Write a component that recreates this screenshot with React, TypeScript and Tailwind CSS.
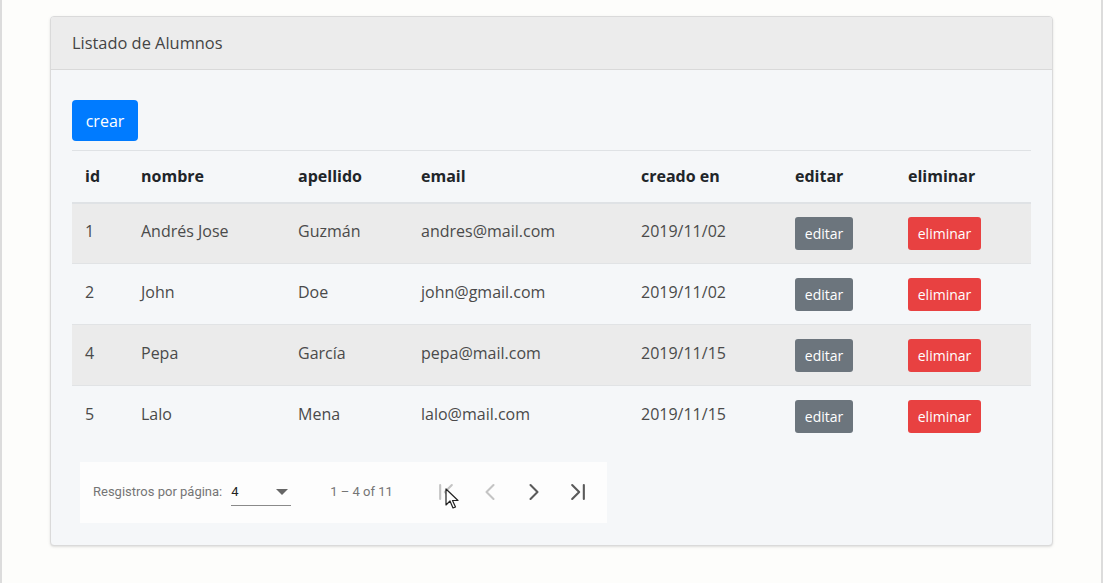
import { ChevronLeft, ChevronRight, ChevronFirst, ChevronLast } from 'lucide-react';

interface Alumno {
  id: number;
  nombre: string;
  apellido: string;
  email: string;
  creado: string;
}

const alumnos: Alumno[] = [
  { id: 1, nombre: 'Andrés Jose', apellido: 'Guzmán', email: 'andres@mail.com', creado: '2019/11/02' },
  { id: 2, nombre: 'John', apellido: 'Doe', email: 'john@gmail.com', creado: '2019/11/02' },
  { id: 4, nombre: 'Pepa', apellido: 'García', email: 'pepa@mail.com', creado: '2019/11/15' },
  { id: 5, nombre: 'Lalo', apellido: 'Mena', email: 'lalo@mail.com', creado: '2019/11/15' },
];

const columns = [
  { label: 'id', width: 'w-[56px]' },
  { label: 'nombre', width: 'w-[157px]' },
  { label: 'apellido', width: 'w-[123px]' },
  { label: 'email', width: 'w-[220px]' },
  { label: 'creado en', width: 'w-[154px]' },
  { label: 'editar', width: 'w-[113px]' },
  { label: 'eliminar', width: 'w-[136px]' },
];

const Paginator = () => (
  <div className="relative mt-[15px] ml-2 flex h-[61px] w-[527px] items-center bg-[#fdfdfd] pl-[13px] font-['Roboto',sans-serif] text-[13px] text-[#757575]">
    <span>Resgistros por página:</span>
    <div className="ml-[9px] flex h-[28px] w-[60px] items-center justify-between border-b border-[#8a8a8a] text-[#222]">
      <span>4</span>
      <svg width="12" height="6" viewBox="0 0 12 6" className="mr-[3px]">
        <path d="M0 0 L6 6 L12 0 Z" fill="#666" />
      </svg>
    </div>
    <span className="ml-[39px]">1 – 4 of 11</span>
    <div className="ml-[39px] flex items-center gap-[16px]">
      <ChevronFirst size={28} strokeWidth={1.8} className="text-[#c4c4c4]" />
      <ChevronLeft size={28} strokeWidth={1.8} className="text-[#c4c4c4]" />
      <ChevronRight size={28} strokeWidth={1.8} className="text-[#5a5a5a]" />
      <ChevronLast size={28} strokeWidth={1.8} className="text-[#5a5a5a]" />
    </div>
    {/* mouse pointer caught in the capture */}
    <svg width="14" height="22" viewBox="0 0 14 22" className="absolute left-[365px] top-[26px]">
      <path d="M1 1 L1 17 L5 13 L8 20 L10.5 19 L7.5 12.5 L13 12.5 Z" fill="#fff" stroke="#222" strokeWidth="1.2" strokeLinejoin="round" />
    </svg>
  </div>
);

export default function App() {
  return (
    <div className="h-[583px] w-[1103px] overflow-hidden border-x-2 border-[#dcdcdc] bg-[#fdfdfb] pt-[16px] pl-[48px] font-['Open_Sans',sans-serif]">
      <div className="w-[1003px] overflow-hidden rounded-[4px] border border-[#dadada] bg-[#f5f7f9] shadow-sm">
        <div className="flex h-[53px] items-center border-b border-[#d9d9d9] bg-[#ececec] px-[21px] pt-[1px] text-[16.4px] text-[#444]">
          Listado de Alumnos
        </div>
        <div className="px-[21px] pt-[30px] pb-[22px]">
          <button className="h-[41px] w-[66px] rounded-[4px] bg-[#007bff] text-[16px] text-white">crear</button>

          <table className="mt-[9px] w-[959px] table-fixed border-collapse text-[16px]">
            <thead>
              <tr className="h-[52px] border-t border-[#dfe2e5] border-b-2 border-b-[#dfe2e5]">
                {columns.map((c) => (
                  <th key={c.label} className={`${c.width} px-[13px] text-left font-bold text-[#212529]`}>
                    {c.label}
                  </th>
                ))}
              </tr>
            </thead>
            <tbody>
              {alumnos.map((a, i) => (
                <tr
                  key={a.id}
                  className={`h-[61px] ${i > 0 ? 'border-t border-[#e1e3e5]' : ''} ${i % 2 === 0 ? 'bg-[#ebebeb]' : ''} text-[#4a4a4a]`}
                >
                  <td className="px-[13px] pb-[5px]">{a.id}</td>
                  <td className="px-[13px] pb-[5px]">{a.nombre}</td>
                  <td className="px-[13px] pb-[5px]">{a.apellido}</td>
                  <td className="px-[13px] pb-[5px]">{a.email}</td>
                  <td className="px-[13px] pb-[5px]">{a.creado}</td>
                  <td className="px-[13px]">
                    <button className="h-[33px] w-[58px] rounded-[3px] bg-[#6c757d] text-[14px] text-white">editar</button>
                  </td>
                  <td className="px-[13px]">
                    <button className="h-[33px] w-[73px] rounded-[3px] bg-[#e84141] text-[14px] text-white">eliminar</button>
                  </td>
                </tr>
              ))}
            </tbody>
          </table>

          <Paginator />
        </div>
      </div>
    </div>
  );
}
